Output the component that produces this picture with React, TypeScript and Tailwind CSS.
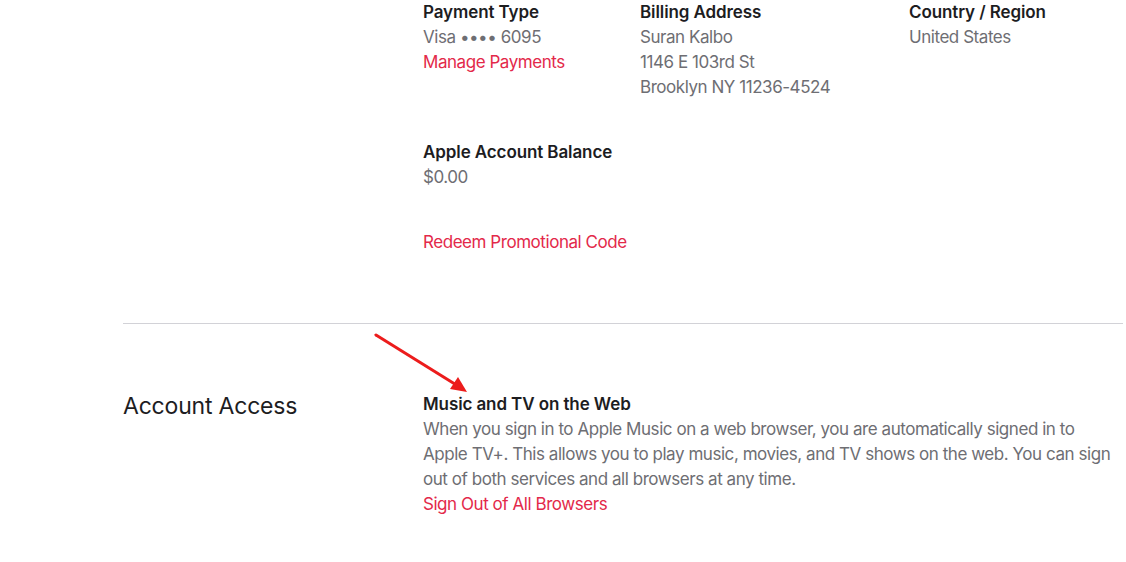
import React from "react"

const Label = ({ children }: { children: React.ReactNode }) => (
  <div className="font-semibold tracking-[-0.1px] text-[#1d1d1f]">{children}</div>
)

const Value = ({ children }: { children: React.ReactNode }) => (
  <div className="text-[#6e6e73]">{children}</div>
)

const Link = ({ children }: { children: React.ReactNode }) => (
  <a href="#" className="block text-[#e3294a]">
    {children}
  </a>
)

export default function App() {
  return (
    <div
      className="relative min-h-[562px] w-[1126px] overflow-hidden bg-white text-[17px] leading-[25px] tracking-[-0.45px]"
      style={{ fontFamily: "Inter, 'Liberation Sans', sans-serif" }}
    >
      <div className="ml-[123px] mr-[3px]">
        {/* payment details */}
        <div className="pl-[300px]">
          <div className="flex">
            <div className="w-[217px]">
              <Label>Payment Type</Label>
              <Value>Visa •••• 6095</Value>
              <Link>Manage Payments</Link>
            </div>
            <div className="w-[269px]">
              <Label>Billing Address</Label>
              <Value>Suran Kalbo</Value>
              <Value>1146 E 103rd St</Value>
              <Value>Brooklyn NY 11236-4524</Value>
            </div>
            <div>
              <Label>Country / Region</Label>
              <Value>United States</Value>
            </div>
          </div>

          <div className="mt-[40px]">
            <Label>Apple Account Balance</Label>
            <Value>$0.00</Value>
          </div>

          <div className="mt-[40px]">
            <Link>Redeem Promotional Code</Link>
          </div>
        </div>

        <div className="mt-[68px] border-t border-[#d2d2d7]" />

        {/* account access */}
        <div className="mt-[68px] flex">
          <h2 className="w-[300px] text-[23px] leading-[28px] tracking-[-0.2px] text-[#1d1d1f]">
            Account Access
          </h2>
          <div className="w-[700px]">
            <Label>Music and TV on the Web</Label>
            <p className="text-[#6e6e73]">
              When you sign in to Apple Music on a web browser, you are automatically signed in to
              Apple TV+. This allows you to play music, movies, and TV shows on the web. You can
              sign out of both services and all browsers at any time.
            </p>
            <Link>Sign Out of All Browsers</Link>
          </div>
        </div>
      </div>

      {/* annotation arrow */}
      <svg className="absolute left-[370px] top-[330px]" width="104" height="68" viewBox="0 0 104 68">
        <line x1="6" y1="5" x2="88" y2="56" stroke="#ec1c1c" strokeWidth="3" strokeLinecap="round" />
        <polygon points="97,62 80,59 88,47" fill="#ec1c1c" />
      </svg>
    </div>
  )
}
